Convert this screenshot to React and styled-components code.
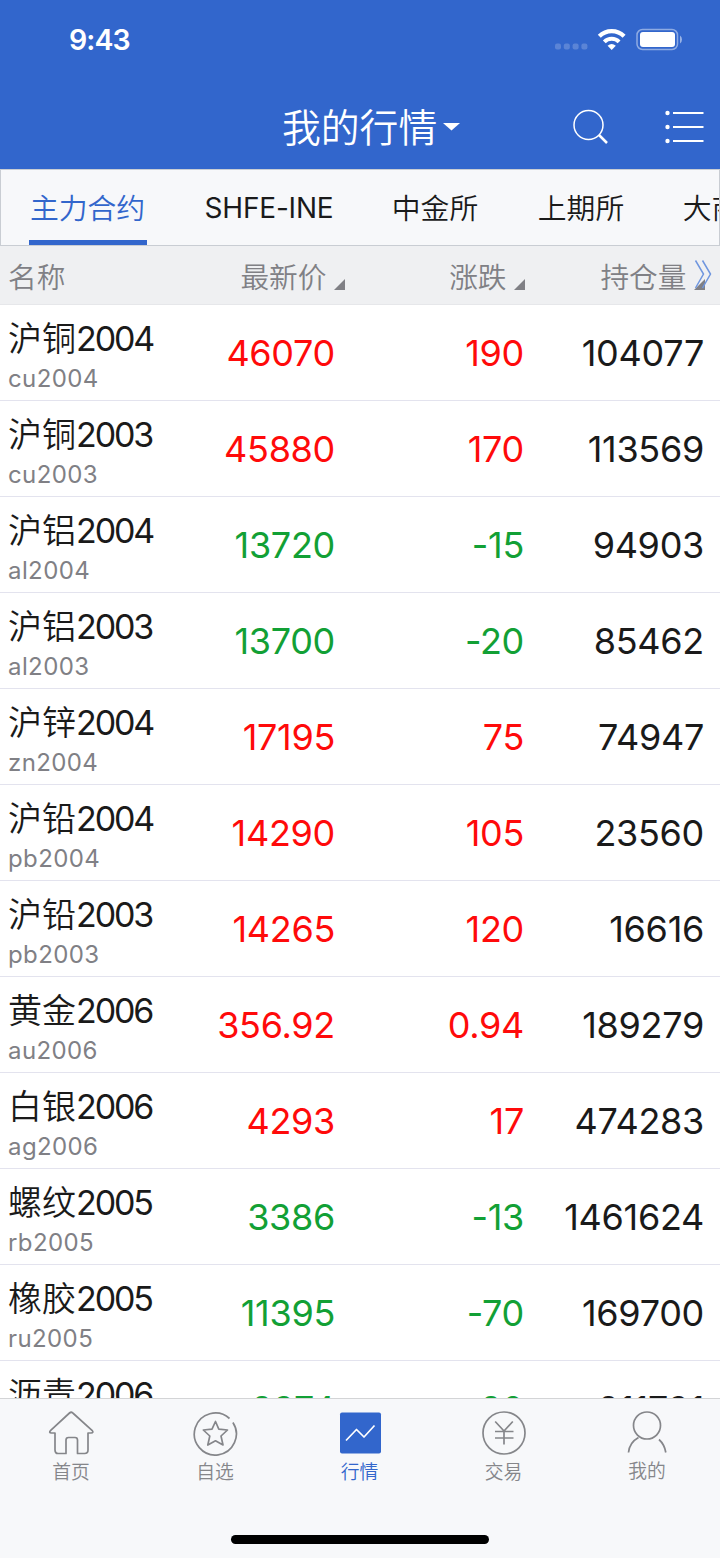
import React from 'react';
import styled, { createGlobalStyle } from 'styled-components';

const Global = createGlobalStyle`
  * { box-sizing: border-box; }
  body { margin: 0; background: #fff; }
`;

const latin = `Inter, "Noto Sans CJK SC", sans-serif`;
const han = `"Noto Sans CJK SC", sans-serif`;

const Screen = styled.div`
  width: 720px;
  height: 1558px;
  overflow: hidden;
  display: flex;
  flex-direction: column;
  font-family: ${latin};
  color: #1a1a1a;
  white-space: nowrap;
`;

const Header = styled.header`
  height: 169px;
  flex: none;
  background: #3266cc;
  color: #fff;
`;

const StatusBar = styled.div`
  height: 84px;
  padding: 0 38px 6px 69px;
  display: flex;
  align-items: center;
  justify-content: space-between;
`;

const Clock = styled.span`
  font-size: 28.5px;
  font-weight: 600;
  line-height: 40px;
  letter-spacing: -0.9px;
  padding-top: 1px;
`;

const StatusIcons = styled.svg`
  display: block;
`;

const NavBar = styled.div`
  height: 85px;
  display: grid;
  grid-template-columns: 282px 1fr 38px 54px 42px 16px;
  align-items: center;
`;

const Title = styled.h1`
  grid-column: 2;
  margin: 0;
  display: flex;
  align-items: center;
  gap: 5px;
  font: 350 38.8px/56px ${han};
`;

const TitleText = styled.span`
  margin-top: -3px;
`;

const MenuIcon = styled.svg`
  grid-column: 5;
`;

const Tabs = styled.nav`
  height: 77px;
  flex: none;
  display: flex;
  padding-left: 28px;
  overflow: hidden;
  background: #f7f8fa;
  border: 1px solid #c9cdd3;
`;

const Tab = styled.div`
  flex: none;
  width: ${p => p.$width}px;
  margin-right: ${p => p.$gap}px;
  height: 75px;
  font: ${p => (p.$latin ? `400 28px/76px ${latin}` : `350 28.8px/74px ${han}`)};
  letter-spacing: ${p => (p.$latin ? '-0.2px' : 0)};
  text-indent: ${p => (p.$latin ? 0 : '-1px')};
  text-align: center;
  color: ${p => (p.$active ? '#3266cc' : '#1a1a1a')};
  border-bottom: ${p => (p.$active ? '5px solid #3266cc' : 'none')};
`;

const TableHead = styled.div`
  height: 59px;
  flex: none;
  display: grid;
  grid-template-columns: 337px 180px 180px;
  padding-left: 8px;
  background: #eff0f2;
  border-bottom: 1px solid #e6e7ea;
  color: #808085;
  font: 350 28.7px/59px ${han};
`;

const HeadCell = styled.div`
  display: flex;
  justify-content: ${p => (p.$first ? 'space-between' : 'flex-end')};
`;

const SortLabel = styled.span`
  display: flex;
  align-items: center;
  gap: 7.5px;
`;

const SortMark = styled.svg`
  display: block;
  margin-top: 18px;
  overflow: visible;
`;

const List = styled.main`
  flex: 1;
  min-height: 0;
  overflow: hidden;
  background: #fff;
`;

const Row = styled.div`
  height: 96px;
  display: grid;
  grid-template-columns: 200px 127px 189px 180px;
  align-items: center;
  padding-left: 8px;
  border-bottom: 1px solid #e3e3ee;
`;

const NameCell = styled.div`
  display: flex;
  flex-direction: column;
  height: 95px;
  padding-top: 10px;
`;

const Name = styled.div`
  display: flex;
  align-items: baseline;
  height: 44px;
  font: 400 34px/43px ${latin};
`;

const NameHan = styled.span`
  font: 350 34px/43px ${han};
`;

const NameYear = styled.span`
  letter-spacing: -2.1px;
`;

const Code = styled.div`
  font-size: 24px;
  line-height: 40px;
  letter-spacing: 0.4px;
  color: #808085;
`;

const Value = styled.div`
  text-align: right;
  font-size: 36px;
  line-height: 48px;
  letter-spacing: -0.3px;
  padding-top: 1px;
  color: ${p => p.$color};
`;

const TabBar = styled.footer`
  height: 160px;
  flex: none;
  display: flex;
  flex-direction: column;
  align-items: center;
  justify-content: space-between;
  padding-bottom: 14px;
  background: #f7f8fa;
  border-top: 1px solid #d3d4d6;
`;

const TabItems = styled.div`
  width: 720px;
  display: grid;
  grid-template-columns: 142px 146px 143px 145px 142px;
`;

const TabItem = styled.div`
  display: flex;
  flex-direction: column;
  align-items: center;
  color: ${p => (p.$active ? '#3266cc' : '#85868a')};
  font: 350 18.8px/26px ${han};
  padding-top: 10px;
`;

const TabIcon = styled.svg`
  display: block;
  width: 48px;
  height: 48px;
  margin-bottom: ${p => (p.$raised ? 0 : 1)}px;
`;

const HomeIndicator = styled.div`
  width: 258px;
  height: 9px;
  border-radius: 5px;
  background: #000;
`;

const RED = '#ff0a0a';
const GREEN = '#12a035';

const rows = [
  ['沪铜', '2004', 'cu2004', '46070', '190', '104077'],
  ['沪铜', '2003', 'cu2003', '45880', '170', '113569'],
  ['沪铝', '2004', 'al2004', '13720', '-15', '94903'],
  ['沪铝', '2003', 'al2003', '13700', '-20', '85462'],
  ['沪锌', '2004', 'zn2004', '17195', '75', '74947'],
  ['沪铅', '2004', 'pb2004', '14290', '105', '23560'],
  ['沪铅', '2003', 'pb2003', '14265', '120', '16616'],
  ['黄金', '2006', 'au2006', '356.92', '0.94', '189279'],
  ['白银', '2006', 'ag2006', '4293', '17', '474283'],
  ['螺纹', '2005', 'rb2005', '3386', '-13', '1461624'],
  ['橡胶', '2005', 'ru2005', '11395', '-70', '169700'],
  ['沥青', '2006', 'bu2006', '2974', '-20', '211791'],
];

const tabs = [
  ['主力合约', 118, 57],
  ['SHFE-INE', 130, 58],
  ['中金所', 87, 59],
  ['上期所', 87, 58],
  ['大商所', 87, 0],
];

const Mark = () => (
  <SortMark width="11" height="11">
    <path d="M11 0V11H0Z" fill="#808085" />
  </SortMark>
);

const icons = {
  home: (
    <path d="M25.8 4 45 21.3Q47.2 23.9 44 24H41V41Q41 44.5 37.500 44.500H30.500V31Q30.500 28.500 28 28.500H21.500Q19 28.500 19 31V44.500H11Q8 44.500 8 41V24H4.500Q1.300 23.900 3.700 21.300L22.500 4Q24.200 2.500 25.800 4Z" />
  ),
  star: (
    <>
      <path d="M38.500 9.500A21 21 0 1 0 41.900 13.500" />
      <path d="M24.500 12.500 27.800 20.200 36.500 21 30 27 32 36 24.500 31.800 16.800 36 18.800 27 12.300 21 21 20.200Z" />
    </>
  ),
  chart: (
    <>
      <rect x="4" y="3.500" width="41" height="41" rx="2" fill="currentColor" stroke="none" />
      <path d="M10 31.500 20.500 20.500 28 28 38.500 16.500" stroke="#fff" />
    </>
  ),
  yen: (
    <>
      <circle cx="24" cy="24" r="21" />
      <path d="M15.200 12.500 24 22 32.800 12.500M15 22.500H33.500M15 29H33.500M24 22V35.500" />
    </>
  ),
  user: (
    <>
      <circle cx="24" cy="16.500" r="13.500" />
      <path d="M15.500 28.500Q6.500 33.500 5.500 43.500M36 30.500Q41.500 35.500 42.800 43.500" />
    </>
  ),
};

const nav = [
  ['home', '首页'],
  ['star', '自选'],
  ['chart', '行情'],
  ['yen', '交易'],
  ['user', '我的'],
];

export default function App() {
  return (
    <Screen>
      <Global />
      <Header>
        <StatusBar>
          <Clock>9:43</Clock>
          <StatusIcons width="128" height="24" viewBox="554 27 128 24">
            <g fill="#fff" fillOpacity="0.2">
              {[555, 563.8, 572.6, 581.4].map(x => (
                <rect key={x} x={x} y="43.500" width="6" height="6" rx="2" />
              ))}
            </g>
            <g fill="none" stroke="#fff">
              <path d="M599.300 36.300A17.600 17.600 0 0 1 624.100 36.300" strokeWidth="4.200" />
              <path d="M604.300 41.800A10.500 10.500 0 0 1 619.100 41.800" strokeWidth="4" />
            </g>
            <path d="M607.600 45.800Q611.700 42.200 615.800 45.800L611.700 49.900Z" fill="#fff" />
            <rect x="637" y="29.500" width="40.500" height="20" rx="5.500" fill="none" stroke="#fff" strokeOpacity="0.45" strokeWidth="1.500" />
            <rect x="640" y="32" width="35" height="15" rx="3" fill="#fff" />
            <path d="M680 35.500V43.500Q682 42 682 39.500T680 35.500Z" fill="#fff" fillOpacity="0.5" />
          </StatusIcons>
        </StatusBar>
        <NavBar>
          <Title>
            <TitleText>我的行情</TitleText>
            <svg width="19" height="9"><path d="M1 1H18L9.500 8.500Z" fill="#fff" /></svg>
          </Title>
          <svg width="38" height="38" fill="none" stroke="#fff">
            <circle cx="18.500" cy="17" r="14.500" strokeWidth="1.500" />
            <path d="M29 27 37 35" strokeWidth="2.500" />
          </svg>
          <MenuIcon width="42" height="38">
            {[5, 19, 33].map(y => (
              <g key={y}>
                <circle cx="5.500" cy={y} r="2.200" fill="#fff" />
                <path d={`M11 ${y}H41.500`} stroke="#fff" strokeWidth="2" />
              </g>
            ))}
          </MenuIcon>
        </NavBar>
      </Header>
      <Tabs>
        {tabs.map(([label, width, gap], i) => (
          <Tab key={label} $width={width} $gap={gap} $latin={i === 1} $active={i === 0}>
            {label}
          </Tab>
        ))}
      </Tabs>
      <TableHead>
        <HeadCell $first>
          <span>名称</span>
          <SortLabel>最新价<Mark /></SortLabel>
        </HeadCell>
        <HeadCell>
          <SortLabel>涨跌<Mark /></SortLabel>
        </HeadCell>
        <HeadCell>
          <SortLabel>
            持仓量
            <SortMark width="11" height="11">
              <path d="M11 0V11H0Z" fill="#808085" />
              <path d="M1.500-18.500 9.500-5 1.500 9M8.500-18.500 16.500-5 8.500 9" fill="none" stroke="#6f96df" strokeWidth="1.500" />
            </SortMark>
          </SortLabel>
        </HeadCell>
      </TableHead>
      <List>
        {rows.map(([variety, year, code, price, change, volume]) => {
          const color = change[0] === '-' ? GREEN : RED;
          return (
            <Row key={code}>
              <NameCell>
                <Name>
                  <NameHan>{variety}</NameHan>
                  <NameYear>{year}</NameYear>
                </Name>
                <Code>{code}</Code>
              </NameCell>
              <Value $color={color}>{price}</Value>
              <Value $color={color}>{change}</Value>
              <Value $color="#1a1a1a">{volume}</Value>
            </Row>
          );
        })}
      </List>
      <TabBar>
        <TabItems>
          {nav.map(([icon, label]) => (
            <TabItem key={icon} $active={icon === 'chart'}>
              <TabIcon $raised={icon === 'user'} viewBox="0 0 48 48" fill="none" stroke="currentColor" strokeWidth="1.700" strokeLinejoin="round">
                {icons[icon]}
              </TabIcon>
              {label}
            </TabItem>
          ))}
        </TabItems>
        <HomeIndicator />
      </TabBar>
    </Screen>
  );
}
